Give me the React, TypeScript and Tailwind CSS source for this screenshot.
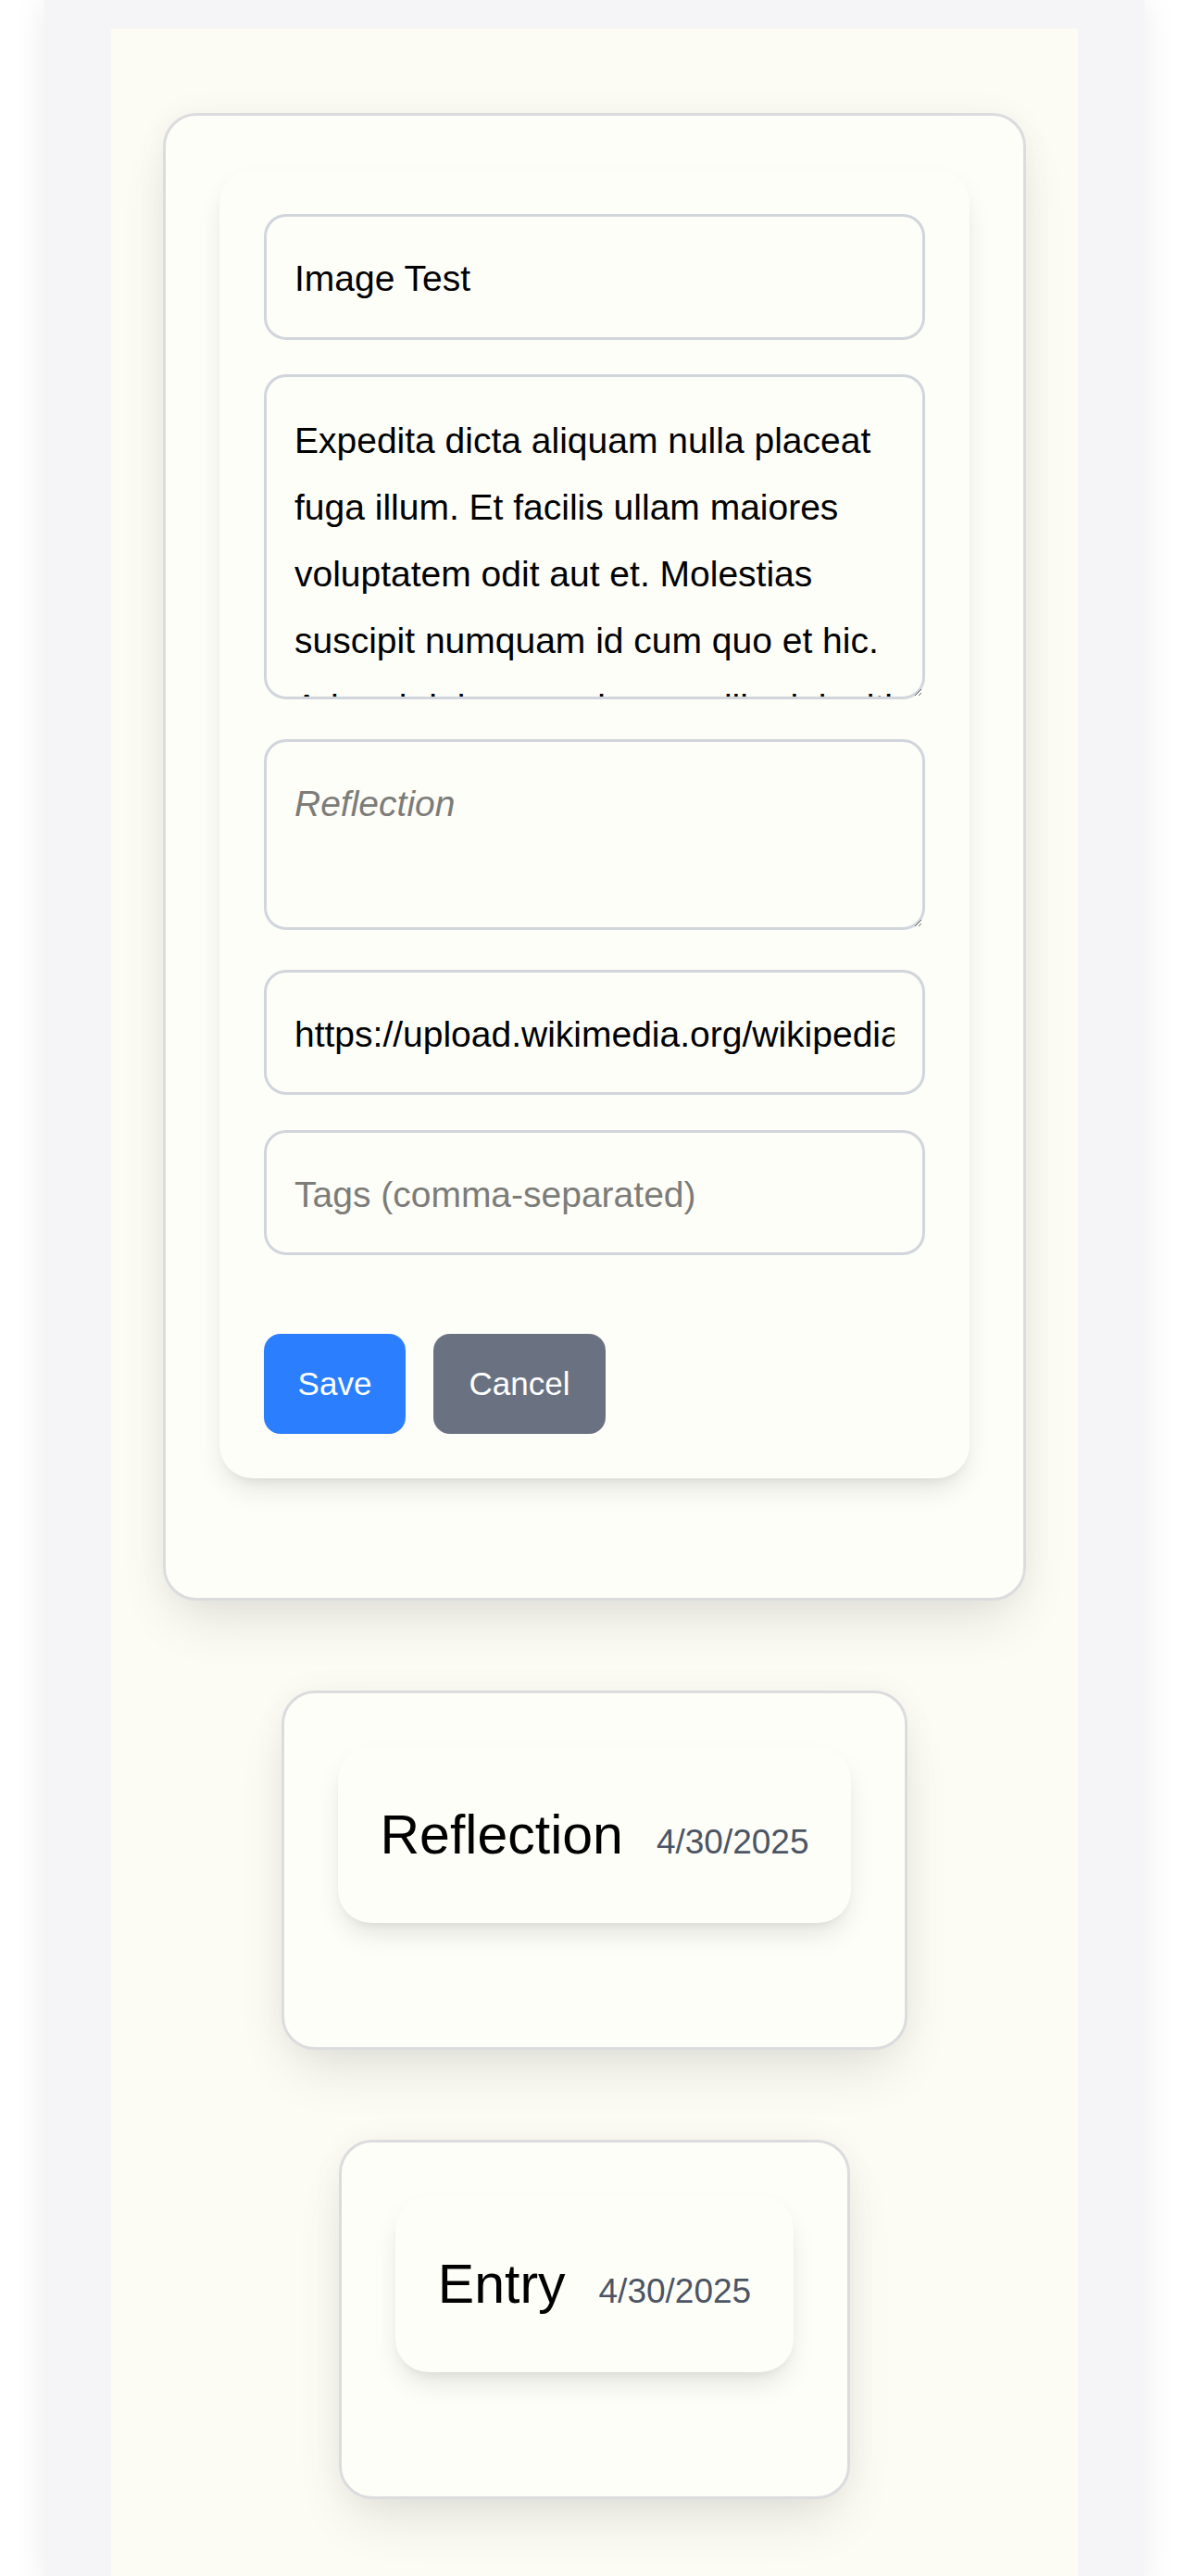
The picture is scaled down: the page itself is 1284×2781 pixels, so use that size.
import React from "react";

const entries = [
  { title: "Reflection", date: "4/30/2025" },
  { title: "Entry", date: "4/30/2025" },
];

const body =
  "Expedita dicta aliquam nulla placeat fuga illum. Et facilis ullam maiores voluptatem odit aut et. Molestias suscipit numquam id cum quo et hic. Ad sed dolorem quisquam illo deleniti dolore labore.";

function EditForm() {
  return (
    <div className="w-[932px] rounded-[36px] border-[3px] border-[#dcdcdf] bg-[#fefef8] p-[58px] pb-[129px] shadow-[0_30px_60px_-12px_rgba(0,0,0,0.11),0_0_36px_rgba(0,0,0,0.04)]">
      <div className="flex flex-col rounded-[36px] bg-[#fefef9] p-12 shadow-[0_15px_30px_-6px_rgba(0,0,0,0.12),0_6px_12px_-6px_rgba(0,0,0,0.08)]">
        <input
          defaultValue="Image Test"
          className="block h-[136px] w-full rounded-[24px] border-[3px] border-gray-300 bg-transparent px-[30px] pt-[4px] text-[39px] text-black outline-none"
        />
        <textarea
          defaultValue={body}
          rows={4}
          className="mt-[37px] block h-[351px] w-full rounded-[24px] border-[3px] border-gray-300 bg-transparent px-[30px] pt-[33px] pb-[23px] text-[39px] leading-[72px] text-black outline-none"
        />
        <textarea
          placeholder="Reflection"
          rows={2}
          className="mt-[43px] block h-[206px] w-full rounded-[24px] border-[3px] border-gray-300 bg-transparent px-[30px] pt-[31px] pb-[25px] text-[39px] leading-[72px] text-black outline-none placeholder:italic placeholder:text-[#7c7c78]"
        />
        <input
          defaultValue="https://upload.wikimedia.org/wikipedia/commons/thumb/a/a9/Example.jpg/640px-Example.jpg"
          className="mt-[43px] block h-[135px] w-full rounded-[24px] border-[3px] border-gray-300 bg-transparent px-[30px] pt-[4px] text-[39px] text-black outline-none"
        />
        <input
          placeholder="Tags (comma-separated)"
          className="mt-[38px] block h-[135px] w-full rounded-[24px] border-[3px] border-gray-300 bg-transparent px-[30px] pt-[4px] text-[39px] text-black outline-none placeholder:text-[#7c7c78]"
        />
        <div className="mt-[85px] flex gap-[30px]">
          <button className="h-[108px] w-[153px] rounded-[18px] bg-blue-500 text-[35px] text-white">
            Save
          </button>
          <button className="h-[108px] w-[186px] rounded-[18px] bg-gray-500 text-[35px] text-white">
            Cancel
          </button>
        </div>
      </div>
    </div>
  );
}

function EntryCard({ title, date }: { title: string; date: string }) {
  return (
    <div className="w-fit rounded-[36px] border-[3px] border-[#dcdcdf] bg-[#fefef8] p-[58px] pb-[134px] shadow-[0_30px_60px_-12px_rgba(0,0,0,0.11),0_0_36px_rgba(0,0,0,0.04)]">
      <div className="flex items-baseline gap-[36px] rounded-[36px] bg-[#fefef9] px-[46px] py-[47px] shadow-[0_15px_30px_-6px_rgba(0,0,0,0.12),0_6px_12px_-6px_rgba(0,0,0,0.08)]">
        <h2 className="text-[59px] leading-[96px] text-black">{title}</h2>
        <span className="text-[37px] text-[#4b5563]">{date}</span>
      </div>
    </div>
  );
}

export default function App() {
  return (
    <div className="min-h-screen bg-white font-['Liberation_Sans',Arial,sans-serif]">
      <div className="mx-12 flex min-h-screen flex-col bg-[#f5f5f7] px-18 pt-[31px] shadow-[0_0_36px_rgba(0,0,0,0.08)]">
        <main className="flex flex-1 flex-col items-center gap-[97px] bg-[#fcfcf5] pt-[91px] pb-24">
          <EditForm />
          {entries.map((e) => (
            <EntryCard key={e.title} title={e.title} date={e.date} />
          ))}
        </main>
      </div>
    </div>
  );
}
